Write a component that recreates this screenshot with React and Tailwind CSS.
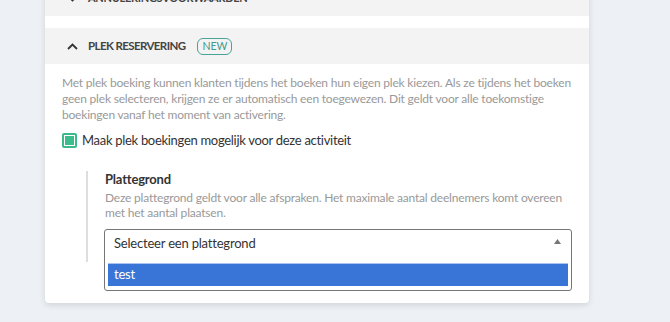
import React from "react";

export default function App() {
  return (
    <div className="w-[670px] h-[322px] overflow-hidden bg-[#edf0f4] pl-[45px]" style={{ fontFamily: 'Lato, sans-serif' }}>
      <div className="w-[544px] bg-white rounded-b-[4px] shadow-[0_2px_6px_rgba(0,0,0,0.12)] pb-[12px] -mt-[20px]">
        {/* Collapsed section */}
        <div className="h-[36px] bg-[#f3f3f3] flex items-center pl-[22px]">
          <svg width="11" height="7" viewBox="0 0 11 7" className="mr-[10px]">
            <path d="M1 1l4.5 4.5L10 1" fill="none" stroke="#333" strokeWidth="1.8" />
          </svg>
          <span className="text-[11px] font-bold text-[#444] tracking-[-0.3px]">ANNULERINGSVOORWAARDEN</span>
        </div>
        <div className="h-[12px]" />
        {/* Expanded header */}
        <div className="h-[36px] bg-[#f3f3f3] flex items-center pl-[22px]">
          <svg width="11" height="7" viewBox="0 0 11 7" className="mr-[10px]">
            <path d="M1 6l4.5-4.5L10 6" fill="none" stroke="#333" strokeWidth="1.8" />
          </svg>
          <span className="text-[11.5px] font-bold text-[#444] tracking-[-0.6px]">PLEK RESERVERING</span>
          <span className="ml-[12px] h-[17px] w-[35px] justify-center flex items-center border border-[#4aa398] rounded-[6px] text-[10.5px] text-[#3f9a8f] leading-none">NEW</span>
        </div>
        {/* Content */}
        <div className="pl-[17px] pr-[10px] pt-[11px]">
          <p className="text-[12px] leading-[16px] text-[#999] tracking-[-0.2px]">
            Met plek boeking kunnen klanten tijdens het boeken hun eigen plek kiezen. Als ze tijdens het boeken geen plek selecteren, krijgen ze er automatisch een toegewezen. Dit geldt voor alle toekomstige boekingen vanaf het moment van activering.
          </p>
          <label className="flex items-center mt-[8px]">
            <span className="w-[15px] h-[15px] border-[2px] border-[#3dba8a] rounded-[2px] p-[1px] flex">
              <span className="flex-1 bg-[#3dbd8e]" />
            </span>
            <span className="ml-[5px] text-[13px] text-[#333] leading-[18px] tracking-[-0.3px]">Maak plek boekingen mogelijk voor deze activiteit</span>
          </label>
          <div className="mt-[22px] ml-[24px] mr-[7px] flex">
            <div className="w-[2px] bg-[#dedede] h-[91px]" />
            <div className="flex-1 pl-[17px] -mt-[1px]">
              <div className="text-[13px] font-bold text-[#333] leading-[18px] tracking-[-0.2px]">Plattegrond</div>
              <p className="mt-[2px] text-[12px] leading-[15px] text-[#999] tracking-[-0.2px]">
                Deze plattegrond geldt voor alle afspraken. Het maximale aantal deelnemers komt overeen met het aantal plaatsen.
              </p>
            </div>
          </div>
        </div>
        <div className="pl-[59px] pr-[17px] -mt-[33px]">
          <div className="relative h-[62px] border border-[#767676] rounded-[3px] px-[3px] bg-white">
            <div className="h-[28px] flex items-center pl-[6px] text-[13px] text-[#333] tracking-[-0.2px]">Selecteer een plattegrond</div>
            <svg width="7" height="5" viewBox="0 0 7 5" className="absolute right-[10px] top-[9px]">
              <path d="M0 5L3.5 0L7 5z" fill="#777" />
            </svg>
            <div className="mt-[5px] h-[23px] bg-[#3875d7] border-t border-[#a9c4f0] flex items-center pl-[6px] text-[13px] text-white tracking-[-0.2px]">test</div>
          </div>
        </div>
      </div>
    </div>
  );
}
